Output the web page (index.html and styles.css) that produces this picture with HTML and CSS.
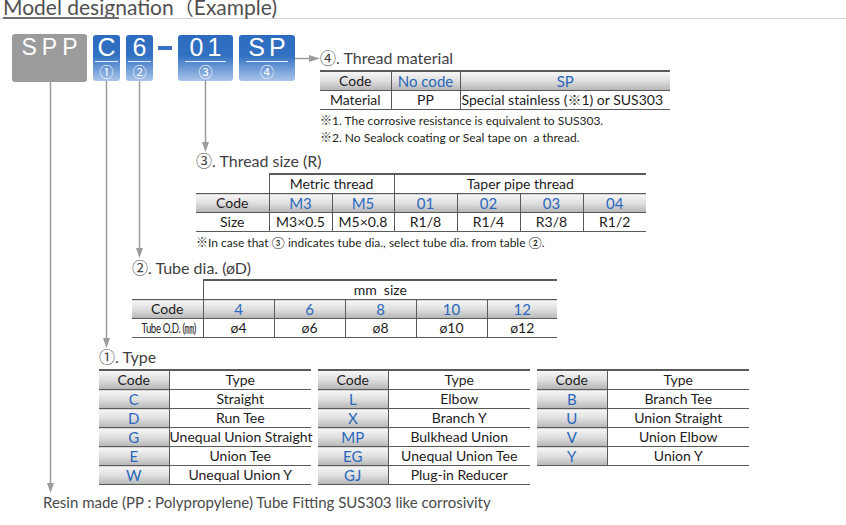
FILE: index.html
```html
<!DOCTYPE html>
<html lang="en">
<head>
<meta charset="utf-8">
<title>Model designation</title>
<link rel="stylesheet" href="styles.css">
</head>
<body>
<div class="page">
  <h1 class="title">Model designation<span class="paren">（</span>Example)</h1>

  <div class="top-row">
    <div class="code-boxes">
      <div class="box box-gray"><span class="spp">SPP</span></div>
      <div class="box box-blue box-narrow"><span class="box-code">C</span><span class="box-rule"></span><span class="box-num">①</span></div>
      <div class="box box-blue box-narrow"><span class="box-code">6</span><span class="box-rule"></span><span class="box-num">②</span></div>
      <div class="dash"></div>
      <div class="box box-blue box-wide"><span class="box-code">01</span><span class="box-rule"></span><span class="box-num">③</span></div>
      <div class="box box-blue box-wide box-last"><span class="box-code">SP</span><span class="box-rule"></span><span class="box-num">④</span></div>
    </div>

    <section class="sec sec-material">
      <h2><span class="circ">④</span>. Thread material</h2>
      <table class="tbl tbl-material">
        <colgroup><col class="c71"><col class="c69"><col class="c210"></colgroup>
        <tr class="hd"><td>Code</td><td class="blue">No code</td><td class="blue">SP</td></tr>
        <tr><td>Material</td><td>PP</td><td class="left">Special stainless (※1) or SUS303</td></tr>
      </table>
      <p class="note">※1. The corrosive resistance is equivalent to SUS303.</p>
      <p class="note">※2. No Sealock coating or Seal tape on &nbsp;a thread.</p>
    </section>
  </div>

  <section class="sec sec-thread">
    <h2><span class="circ">③</span>. Thread size (R)</h2>
    <table class="tbl tbl-thread">
      <colgroup><col class="c73"><col class="c63"><col class="c62"><col class="c63"><col class="c63"><col class="c63"><col class="c63"></colgroup>
      <tr class="grp"><td class="blank"></td><td colspan="2">Metric thread</td><td colspan="4">Taper pipe thread</td></tr>
      <tr class="hd"><td>Code</td><td class="blue">M3</td><td class="blue">M5</td><td class="blue">01</td><td class="blue">02</td><td class="blue">03</td><td class="blue">04</td></tr>
      <tr><td>Size</td><td>M3×0.5</td><td>M5×0.8</td><td>R1/8</td><td>R1/4</td><td>R3/8</td><td>R1/2</td></tr>
    </table>
    <p class="note">※In case that ③ indicates tube dia., select tube dia. from table ②.</p>
  </section>

  <section class="sec sec-tube">
    <h2><span class="circ">②</span>. Tube dia. (øD)</h2>
    <table class="tbl tbl-tube">
      <colgroup><col class="c71"><col class="c71"><col class="c71"><col class="c71"><col class="c71"><col class="c70"></colgroup>
      <tr class="grp"><td class="blank"></td><td colspan="5">mm&nbsp; size</td></tr>
      <tr class="hd"><td>Code</td><td class="blue">4</td><td class="blue">6</td><td class="blue">8</td><td class="blue">10</td><td class="blue">12</td></tr>
      <tr><td><span class="squeeze">Tube O.D. (㎜)</span></td><td>ø4</td><td>ø6</td><td>ø8</td><td>ø10</td><td>ø12</td></tr>
    </table>
  </section>

  <section class="sec sec-type">
    <h2><span class="circ">①</span>. Type</h2>
    <div class="type-tables">
      <table class="tbl tbl-type">
        <colgroup><col class="c70"><col class="c142"></colgroup>
        <tr class="hd"><td>Code</td><td class="plain">Type</td></tr>
        <tr><td class="code">C</td><td>Straight</td></tr>
        <tr><td class="code">D</td><td>Run Tee</td></tr>
        <tr><td class="code">G</td><td>Unequal Union Straight</td></tr>
        <tr><td class="code">E</td><td>Union Tee</td></tr>
        <tr><td class="code">W</td><td>Unequal Union Y</td></tr>
      </table>
      <table class="tbl tbl-type">
        <colgroup><col class="c70"><col class="c142"></colgroup>
        <tr class="hd"><td>Code</td><td class="plain">Type</td></tr>
        <tr><td class="code">L</td><td>Elbow</td></tr>
        <tr><td class="code">X</td><td>Branch Y</td></tr>
        <tr><td class="code">MP</td><td>Bulkhead Union</td></tr>
        <tr><td class="code">EG</td><td>Unequal Union Tee</td></tr>
        <tr><td class="code">GJ</td><td>Plug-in Reducer</td></tr>
      </table>
      <table class="tbl tbl-type">
        <colgroup><col class="c70"><col class="c142"></colgroup>
        <tr class="hd"><td>Code</td><td class="plain">Type</td></tr>
        <tr><td class="code">B</td><td>Branch Tee</td></tr>
        <tr><td class="code">U</td><td>Union Straight</td></tr>
        <tr><td class="code">V</td><td>Union Elbow</td></tr>
        <tr><td class="code">Y</td><td>Union Y</td></tr>
      </table>
    </div>
  </section>

  <p class="resin">Resin made (PP : Polypropylene) Tube Fitting SUS303 like corrosivity</p>

  <svg class="connectors" width="846" height="525" viewBox="0 0 846 525" aria-hidden="true">
    <g stroke="#9c9c9c" stroke-width="1.5" fill="none">
      <line x1="50.5" y1="82" x2="50.5" y2="484"/>
      <line x1="106.5" y1="81" x2="106.5" y2="339"/>
      <line x1="139.5" y1="81" x2="139.5" y2="249"/>
      <line x1="205.5" y1="80" x2="205.5" y2="143"/>
      <line x1="295" y1="58.5" x2="311" y2="58.5"/>
    </g>
    <g fill="#9c9c9c">
      <polygon points="47,483 54,483 50.5,493"/>
      <polygon points="103,338 110,338 106.5,348"/>
      <polygon points="136,248 143,248 139.5,258"/>
      <polygon points="202,142 209,142 205.5,152"/>
      <polygon points="309,55 309,62 320,58.5"/>
    </g>
  </svg>
</div>
</body>
</html>
```
FILE: styles.css
```css
html, body {
  margin: 0;
  padding: 0;
  background: #ffffff;
}

body {
  font-family: Lato, "Noto Sans CJK JP", sans-serif;
  color: #1e1b1c;
}

.page {
  position: relative;
  width: 846px;
  height: 525px;
  overflow: hidden;
}

/* ---------- title ---------- */
.title {
  position: relative;
  margin: -4px 0 0;
  padding: 0 0 1px 3px;
  font-size: 21px;
  line-height: 21px;
  font-weight: normal;
  color: #505050;
  border-bottom: 1px solid #d2d2d2;
}

.title::after {
  content: "";
  position: absolute;
  left: 3px;
  bottom: -1px;
  width: 116px;
  height: 2px;
  background: #6e6e6e;
}

.paren {
  font-family: "Noto Sans CJK JP", sans-serif;
  font-size: 20px;
}

/* ---------- code boxes ---------- */
.top-row {
  display: flex;
  align-items: flex-start;
  margin-top: 15px;
  padding-left: 12px;
}

.code-boxes {
  display: flex;
  align-items: flex-start;
  gap: 6px;
}

.box {
  display: flex;
  flex-direction: column;
  align-items: stretch;
  border-radius: 3px;
  color: #ffffff;
  text-align: center;
}

.box-gray {
  width: 75px;
  height: 48px;
  background: #9b9b9b;
}

.spp {
  display: block;
  margin-top: 1px;
  padding-left: 5px;
  font-family: "Liberation Sans", Arial, sans-serif;
  font-size: 23px;
  line-height: 25px;
  letter-spacing: 5px;
}

.box-blue {
  height: 46px;
  margin-top: 1px;
  background: linear-gradient(to bottom, #2d6bbf 0%, #3271c2 45%, #aac4ea 100%);
}

.box-narrow { width: 27px; }
.box-wide { width: 55px; }
.box-last { width: 56px; }

.box-code {
  display: block;
  margin-top: 0;
  font-family: "Liberation Sans", Arial, sans-serif;
  font-size: 25px;
  line-height: 25px;
}

.box-wide .box-code {
  letter-spacing: 4px;
  padding-left: 4px;
}

.box-rule {
  display: block;
  height: 1px;
  margin: 1px 2px 0;
  background: rgba(255, 255, 255, 0.85);
}

.box-wide .box-rule {
  margin: 1px 7px 0;
}

.box-num {
  display: block;
  margin-top: 1px;
  font-family: "Noto Sans CJK JP", sans-serif;
  font-size: 14px;
  line-height: 16px;
}

.dash {
  width: 14px;
  height: 4px;
  margin: 12px 0 0 -1px;
  background: #3a73c3;
}

/* ---------- sections ---------- */
.sec h2 {
  margin: 0 0 3px;
  font-size: 16px;
  line-height: 18px;
  font-weight: normal;
  color: #3f3f3f;
}

.circ {
  font-family: "Noto Sans CJK JP", sans-serif;
  font-size: 16px;
}

.sec-material {
  margin: 14px 0 0 25px;
}

.sec-thread {
  margin: 5px 0 0 196px;
}

.sec-tube {
  margin: 7px 0 0 132px;
}

.sec-tube h2 {
  margin-bottom: 2px;
}

.sec-type {
  margin: 9px 0 0 99px;
}

.note {
  margin: 0;
  font-size: 12px;
  line-height: 17px;
  color: #231f20;
}

.tbl + .note {
  margin-top: 2px;
}

.type-tables {
  display: flex;
  align-items: flex-start;
  gap: 7px;
}

.resin {
  margin: 8px 0 0 43px;
  font-size: 15px;
  line-height: 18px;
  color: #4a4a4a;
}

/* ---------- tables ---------- */
.tbl {
  border-collapse: collapse;
  table-layout: fixed;
  font-size: 14px;
}

.tbl td {
  height: 18px;
  padding: 0;
  line-height: 18px;
  text-align: center;
  white-space: nowrap;
  border-bottom: 1px solid #5a5a5a;
}

.tbl td + td {
  border-left: 1px solid #5a5a5a;
}

.tbl tr:first-child td {
  border-top: 2px solid #5a5a5a;
}

.tbl tr.grp td.blank {
  border-top: none;
}

.tbl .hd td,
.tbl td.code {
  background: linear-gradient(to bottom, #f6f6f6 0%, #dedede 50%, #b6b6b6 100%);
}

.tbl .hd td.plain {
  background: #ffffff;
}

.blue,
.tbl td.code {
  color: #2b68bc;
  font-size: 15px;
}

.tbl td.left {
  text-align: left;
  padding-left: 1px;
}

.squeeze {
  display: inline-block;
  font-size: 13px;
  letter-spacing: -0.5px;
  transform: scaleX(0.74);
  transform-origin: center;
}

.c62 { width: 62px; }
.c63 { width: 63px; }
.c69 { width: 69px; }
.c70 { width: 70px; }
.c71 { width: 71px; }
.c73 { width: 73px; }
.c142 { width: 142px; }
.c210 { width: 210px; }

.tbl-material { width: 350px; }
.tbl-thread { width: 450px; }
.tbl-tube { width: 425px; }
.tbl-type { width: 212px; }

/* ---------- connectors ---------- */
.connectors {
  position: absolute;
  left: 0;
  top: 0;
  pointer-events: none;
}
```
